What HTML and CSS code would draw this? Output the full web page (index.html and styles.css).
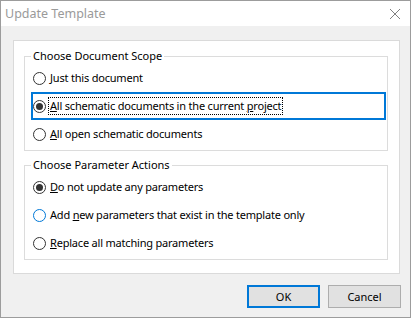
FILE: index.html
```html
<!DOCTYPE html>
<html lang="en">
<head>
    <meta charset="UTF-8">
    <title>Update Template</title>
    <link rel="stylesheet" href="styles.css">
</head>
<body>
    <div class="window">
        <div class="titlebar">
            <span class="title">Update Template</span>
            <svg class="close" width="12" height="12" viewBox="0 0 12 12">
                <path d="M1 1 L11 11 M11 1 L1 11" stroke="#808080" stroke-width="1" fill="none"/>
            </svg>
        </div>

        <div class="client">
            <div class="panel">
                <fieldset class="group">
                    <legend>Choose Document Scope</legend>
                    <div class="row">
                        <span class="radio"></span>
                        <span class="label"><u>J</u>ust this document</span>
                    </div>
                    <div class="row focused">
                        <span class="radio checked"></span>
                        <span class="label dotted"><u>A</u>ll schematic documents in the current <u>p</u>roject</span>
                    </div>
                    <div class="row">
                        <span class="radio"></span>
                        <span class="label"><u>A</u>ll open schematic documents</span>
                    </div>
                </fieldset>

                <fieldset class="group second">
                    <legend>Choose Parameter Actions</legend>
                    <div class="row">
                        <span class="radio checked"></span>
                        <span class="label"><u>D</u>o not update any parameters</span>
                    </div>
                    <div class="row">
                        <span class="radio hover"></span>
                        <span class="label">Add <u>n</u>ew parameters that exist in the template only</span>
                    </div>
                    <div class="row">
                        <span class="radio"></span>
                        <span class="label"><u>R</u>eplace all matching parameters</span>
                    </div>
                </fieldset>
            </div>

            <div class="buttons">
                <button class="btn default">OK</button>
                <button class="btn">Cancel</button>
            </div>
        </div>
    </div>
</body>
</html>
```

FILE: styles.css
```css
* {
    padding: 0;
    margin: 0;
    box-sizing: border-box;
}

body {
    font-family: "Noto Sans", "Open Sans", sans-serif;
    font-size: 11px;
    color: #000;
    background: #f0f0f0;
}

.window {
    width: 411px;
    height: 318px;
    border: 1px solid #9c9c9c;
    display: flex;
    flex-direction: column;
}

.titlebar {
    height: 25px;
    background: #fff;
    display: flex;
    align-items: center;
    justify-content: space-between;
    padding: 0 9px 0 4px;
}

.title {
    font-size: 12.5px;
    color: #9a9a9a;
}

.client {
    flex: 1;
    background: #f0f0f0;
    padding: 14px 9px 0 12px;
}

.panel {
    width: 387px;
    height: 234px;
    background: #fff;
    border: 1px solid #dadada;
    padding: 7px 11px 0 10px;
}

.group {
    border: 1px solid #dcdcdc;
    padding: 0 1px 2px 6px;
}

.group.second {
    margin-top: 6px;
}

.group legend {
    margin-left: 0;
    padding: 0 2px;
    line-height: 16px;
}

.row {
    height: 28px;
    border: 2px solid transparent;
    display: flex;
    align-items: center;
    gap: 3px;
}

.row.focused {
    border-color: #0078d7;
}

.radio {
    width: 13px;
    height: 13px;
    border: 1px solid #333;
    border-radius: 50%;
    background: #fff;
    display: flex;
    align-items: center;
    justify-content: center;
    flex-shrink: 0;
}

.radio.checked::after {
    content: "";
    width: 7px;
    height: 7px;
    border-radius: 50%;
    background: #333;
}

.radio.hover {
    border-color: #0078d7;
}

.label {
    line-height: 16px;
    padding: 0 1px;
    letter-spacing: -0.2px;
}

.label.dotted {
    outline: 1px dotted #000;
}

.buttons {
    display: flex;
    justify-content: flex-end;
    gap: 8px;
    margin-top: 11px;
}

.btn {
    height: 23px;
    width: 73px;
    font-family: inherit;
    font-size: 11px;
    background: #e1e1e1;
    border: 1px solid #adadad;
}

.btn.default {
    border: 2px solid #0078d7;
}
```
